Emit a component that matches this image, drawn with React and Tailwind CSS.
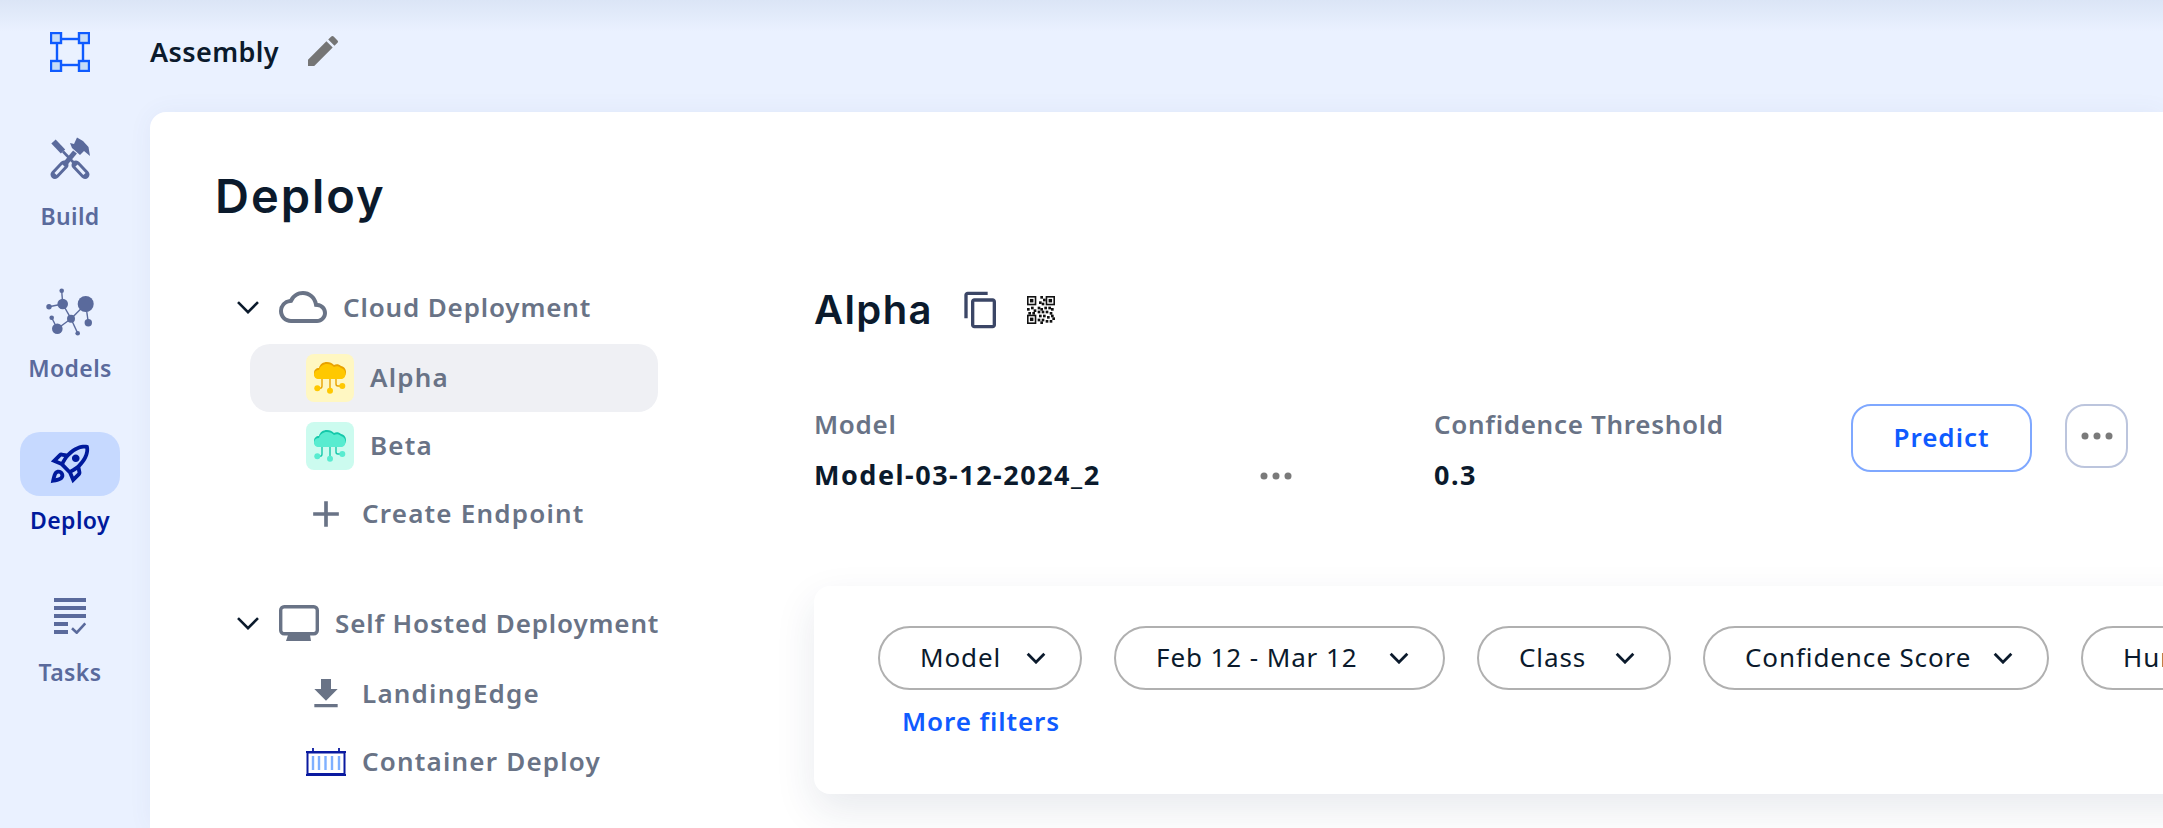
import React from 'react';
import { MdEdit, MdOutlineRocketLaunch, MdOutlineCloud, MdFileDownload, MdAdd, MdOutlineContentCopy } from 'react-icons/md';

function Logo() {
    return (
        <svg width="40" height="40" viewBox="0 0 40 40">
            <rect x="7" y="7" width="26" height="26" fill="none" stroke="#0f5bff" strokeWidth="2.4" />
            {[[1, 1], [29, 1], [1, 29], [29, 29]].map(([x, y]) => (
                <rect key={x + '-' + y} x={x} y={y} width="10" height="10" fill="#c6dcf8" stroke="#0f5bff" strokeWidth="2.4" />
            ))}
        </svg>
    );
}

// crossed screwdriver and hammer, handles have a slot in them
function BuildIcon() {
    return (
        <svg width="40" height="42" viewBox="0 0 40 42" fill="none" stroke="#5a6a9c" strokeLinejoin="round" className="-mt-[4px]">
            <path d="M3.500 4.500L13 14.500" strokeWidth="6" />
            <path d="M13 14.500L24 26" strokeWidth="2.600" />
            <path d="M26 28L35 37.500" strokeWidth="9" strokeLinecap="round" />
            <path d="M26.500 28.500L34.500 37" strokeWidth="3" stroke="#eaf1ff" />
            <path d="M5 37.500L14 28" strokeWidth="9" strokeLinecap="round" />
            <path d="M5.500 37L13.500 28.500" strokeWidth="3" stroke="#eaf1ff" />
            <path d="M15 27L25 15" strokeWidth="5" />
            <path d="M20 6L24 7L27 0.500L33 4L38.500 10L40 19L34 14L30 18L22 11Z" fill="#5a6a9c" stroke="none" />
        </svg>
    );
}

function ModelsIcon() {
    const nodes = [[85.7, 24, 8], [62.7, 24, 5.3], [49, 26.7, 2.7], [61.7, 10.7, 2.3], [51.7, 37.7, 2.3], [71, 38.7, 4], [57.3, 48.7, 5.3], [88.3, 42.7, 3.7], [77.7, 53.3, 2.3]];
    const links = [[61.7, 10.7, 62.7, 24], [49, 26.7, 62.7, 24], [62.7, 24, 71, 38.7], [71, 38.7, 85.7, 24], [85.7, 24, 88.3, 42.7], [71, 38.7, 57.3, 48.7], [57.3, 48.7, 51.7, 37.7], [71, 38.7, 77.7, 53.3]];
    return (
        <svg width="48" height="52" viewBox="46 6 48 52" fill="#5a6a9c" stroke="#5a6a9c">
            {links.map((l, i) => <line key={i} x1={l[0]} y1={l[1]} x2={l[2]} y2={l[3]} strokeWidth="1.4" />)}
            {nodes.map((n, i) => <circle key={i} cx={n[0]} cy={n[1]} r={n[2]} stroke="none" />)}
        </svg>
    );
}

function TasksIcon() {
    return (
        <svg width="32" height="36" viewBox="55 318 32 36" fill="#5a6a9c">
            <rect x="55" y="318" width="32" height="4" />
            <rect x="55" y="326" width="32" height="4" />
            <rect x="55" y="334" width="32" height="4" />
            <rect x="55" y="342" width="14" height="4" />
            <rect x="55" y="350" width="14" height="4" />
            <path d="M73 348.3L77.7 352.7L86.3 343.3" fill="none" stroke="#5a6a9c" strokeWidth="2.6" />
        </svg>
    );
}

function Chevron({ width = 24, strokeWidth = 2.6 }) {
    return (
        <svg width={width} height={width * 0.6} viewBox="0 0 24 14" fill="none" stroke="#0b1a2c" strokeWidth={strokeWidth} className="shrink-0">
            <path d="M2 2L12 12L22 2" />
        </svg>
    );
}

function EndpointIcon({ bg, light, dark }) {
    return (
        <span className={`flex h-12 w-12 shrink-0 items-center justify-center rounded-lg ${bg}`}>
            <svg width="48" height="48" viewBox="0 0 48 48" fill="none">
                <path d="M16 24V32Q16 34.3 14 34.3H11.3M24 24V36M30 24V30Q30 32 32 32H36" stroke={dark} strokeWidth="1.4" />
                <path d="M13 24C9 24 8 21 8 19C8 16 10 14 13 14C14 10 17 8 21 8C24 8 26 9 28 11C30 10 33 10 35 12C38 12.5 40 15 40 18C40 21 38 24 35 24Z" fill={dark} />
                <path d="M13 25C9.5 25 8 23 8 20.5C8 18 10 16 13 16C14 12.5 17 10 21 10C24 10 26 11 28 13C30 12 33 12 35 14C37.5 14.5 39.5 17 39.5 20C39.5 23 37.5 25 35 25Z" fill={light} />
                <circle cx="11.3" cy="34.3" r="3" fill={light} />
                <circle cx="24" cy="36.7" r="3" fill={light} />
                <circle cx="36.3" cy="32" r="3" fill={light} />
            </svg>
        </span>
    );
}

function Monitor() {
    return (
        <svg width="40" height="36" viewBox="0 0 40 36" fill="#697386" className="shrink-0">
            <rect x="1.7" y="1.7" width="36.6" height="27" rx="3.5" fill="none" stroke="#697386" strokeWidth="3.4" />
            <path d="M9 30H31L32 36H7Z" />
        </svg>
    );
}

function ContainerIcon() {
    return (
        <svg width="40" height="28" viewBox="0 0 40 28" fill="none" className="shrink-0">
            <g stroke="#7fb0ff" strokeWidth="2.4">
                <path d="M7 8V22M13 8V22M19.500 8V22M26 8V22M33 8V22" />
            </g>
            <path d="M1.500 4.500H38.500V26H1.500Z" stroke="#0a1aa0" strokeWidth="2" />
            <path d="M0 27H40M0 4H40M7 0V4M33 0V4" stroke="#0a1aa0" strokeWidth="1.800" />
        </svg>
    );
}

function QrIcon() {
    const modules = [[10, 0], [12, 2], [9, 4], [11, 5], [8, 8], [10, 9], [13, 8], [16, 8], [18, 9], [0, 9], [3, 8], [5, 10], [8, 11], [11, 11], [14, 11], [17, 12], [1, 12], [4, 12], [9, 14], [12, 14], [15, 15], [18, 14], [8, 17], [11, 17], [14, 18], [17, 18], [19, 16], [10, 19]];
    return (
        <svg width="28" height="28" viewBox="0 0 21 21" className="shrink-0" fill="#111">
            {[[0, 0], [14, 0], [0, 14]].map(([x, y]) => (
                <g key={x + '-' + y}>
                    <rect x={x + 0.6} y={y + 0.6} width="5.800" height="5.800" fill="none" stroke="#111" strokeWidth="1.200" />
                    <rect x={x + 2.2} y={y + 2.2} width="2.600" height="2.600" />
                </g>
            ))}
            {modules.map(([x, y], i) => <rect key={i} x={x} y={y} width="2" height="2" />)}
        </svg>
    );
}

function Dots() {
    return (
        <svg width="32" height="8" viewBox="0 0 32 8" fill="#7a7a7a">
            <circle cx="4" cy="4" r="3.500" />
            <circle cx="16" cy="4" r="3.500" />
            <circle cx="28" cy="4" r="3.500" />
        </svg>
    );
}

function NavItem({ icon, label, active }) {
    return (
        <div className="flex h-[152px] w-[140px] flex-col items-center">
            <div className={`flex h-16 w-[100px] items-center justify-center rounded-[20px] ${active ? 'bg-[#c6d9ff]' : ''}`}>
                {icon}
            </div>
            <span className={`mt-[8px] h-8 text-[23px] leading-8 font-semibold tracking-[0.4px] ${active ? 'font-bold text-[#001a9c]' : 'text-[#5a6a9c]'}`}>
                {label}
            </span>
        </div>
    );
}

function TreeHead({ icon, label }) {
    return (
        <div className="mb-[3px] flex h-[68px] items-center pl-[19px]">
            <Chevron />
            <span className="ml-[19px] flex items-center gap-4">
                {icon}
                <span className="text-[26px] leading-8 font-semibold tracking-[0.85px] text-[#697386]">{label}</span>
            </span>
        </div>
    );
}

function TreeItem({ icon, label, active }) {
    return (
        <div className={`ml-[33px] flex h-[68px] w-[408px] items-center gap-4 rounded-[20px] pl-[56px] ${active ? 'bg-[#eff0f4]' : ''}`}>
            {icon}
            <span className="pb-[2px] text-[26px] leading-8 font-semibold tracking-[1.2px] text-[#697386]">{label}</span>
        </div>
    );
}

function IconBox({ children }) {
    return <span className="flex w-10 shrink-0 justify-center text-[#697386]">{children}</span>;
}

function FilterPill({ label, width }) {
    return (
        <div className={`flex h-16 shrink-0 items-center justify-between rounded-[32px] border-2 border-[#b0b0b0] pr-[34px] pl-[40px] text-[26px] tracking-[0.9px] text-[#0b1a2c] ${width}`}>
            <span className="pb-[2px] whitespace-nowrap">{label}</span>
            <Chevron width={20} strokeWidth={3.4} />
        </div>
    );
}

export default function App() {
    return (
        <div className="flex h-screen w-full overflow-hidden bg-[#eaf1ff] bg-[linear-gradient(#dbe5f6,#eaf1ff_32px)] font-['Noto_Sans',sans-serif]">
            <aside className="w-[150px] shrink-0">
                <div className="flex h-[112px] w-[140px] items-center justify-center pb-[8px]">
                    <Logo />
                </div>
                <nav className="mt-[16px] flex flex-col">
                    <NavItem icon={<BuildIcon />} label="Build" />
                    <NavItem icon={<ModelsIcon />} label="Models" />
                    <NavItem icon={<MdOutlineRocketLaunch size={46} color="#001a9c" />} label="Deploy" active />
                    <NavItem icon={<TasksIcon />} label="Tasks" />
                </nav>
            </aside>

            <main className="flex min-w-0 flex-1 flex-col">
                <header className="flex h-[112px] shrink-0 items-center gap-[24px] pb-[8px]">
                    <span className="text-[27px] font-semibold tracking-[0.4px] text-[#0b1a2c]">Assembly</span>
                    <MdEdit size={40} color="#757575" className="-mt-[2px]" />
                </header>

                <div className="flex-1 rounded-tl-2xl bg-white pt-[60px] pl-[67px] shadow-[0_0_24px_rgba(60,90,150,0.06)]">
                    <h1 className="-ml-[2px] h-12 text-[47px] leading-12 font-semibold tracking-[2px] text-[#0b1a2c] font-['Inter',sans-serif]">Deploy</h1>

                    <div className="mt-[53px] flex">
                        <div className="w-[597px] shrink-0">
                            <TreeHead icon={<MdOutlineCloud size={48} color="#697386" className="shrink-0" />} label="Cloud Deployment" />
                            <TreeItem active label="Alpha" icon={<EndpointIcon bg="bg-[#fff7c2]" light="#ffc800" dark="#e8a200" />} />
                            <TreeItem label="Beta" icon={<EndpointIcon bg="bg-[#ccfbef]" light="#58ecd0" dark="#14c8aa" />} />
                            <TreeItem label="Create Endpoint" icon={<IconBox><MdAdd size={44} className="shrink-0" /></IconBox>} />
                            <div className="h-[41px]" />
                            <TreeHead icon={<Monitor />} label="Self Hosted Deployment" />
                            <TreeItem label="LandingEdge" icon={<IconBox><MdFileDownload size={40} className="shrink-0" /></IconBox>} />
                            <TreeItem label="Container Deploy" icon={<ContainerIcon />} />
                        </div>

                        <div className="min-w-0 flex-1">
                            <div className="flex h-[74px] items-center">
                                <h2 className="text-[40px] font-semibold tracking-[1.4px] text-[#0b1a2c] font-['Inter',sans-serif]">Alpha</h2>
                                <span className="ml-[28px] text-[#3b4666]"><MdOutlineContentCopy size={40} /></span>
                                <span className="ml-[26px]"><QrIcon /></span>
                            </div>

                            <div className="mt-[57px] flex h-[68px]">
                                <div className="w-[446px] pt-[4px]">
                                    <div className="h-8 text-[26px] leading-8 font-semibold tracking-[0.7px] text-[#697386]">Model</div>
                                    <div className="mt-[19px] h-8 text-[27px] leading-8 font-bold tracking-[1.5px] whitespace-nowrap text-[#0b1a2c]">Model-03-12-2024_2</div>
                                </div>
                                <div className="w-[174px] pt-[68px]"><Dots /></div>
                                <div className="w-[417px] pt-[4px]">
                                    <div className="h-8 text-[26px] leading-8 font-semibold tracking-[0.7px] text-[#697386]">Confidence Threshold</div>
                                    <div className="mt-[19px] h-8 text-[27px] leading-8 font-bold tracking-[1.5px] text-[#0b1a2c]">0.3</div>
                                </div>
                                <button className="h-[68px] w-[181px] rounded-[20px] border-2 border-[#7fa8ff] pb-[2px] text-[26px] font-semibold tracking-[1px] text-[#0f5bff]">Predict</button>
                                <button className="ml-[33px] flex h-16 w-[63px] items-center justify-center rounded-[20px] border-2 border-[#bcc5dd]"><Dots /></button>
                            </div>

                            <div className="mt-[114px] h-[208px] w-[1500px] rounded-2xl bg-white pt-[40px] pl-[64px] shadow-[0_16px_40px_rgba(30,50,90,0.1)]">
                                <div className="flex gap-8">
                                    <FilterPill label="Model" width="w-[204px]" />
                                    <FilterPill label="Feb 12 - Mar 12" width="w-[331px]" />
                                    <FilterPill label="Class" width="w-[194px]" />
                                    <FilterPill label="Confidence Score" width="w-[346px]" />
                                    <FilterPill label="Human Review" width="w-[320px]" />
                                </div>
                                <div className="mt-[15px] h-8 pl-[24px] text-[26px] leading-8 font-semibold tracking-[0.9px] text-[#0f5bff]">More filters</div>
                            </div>
                        </div>
                    </div>
                </div>
            </main>
        </div>
    );
}
